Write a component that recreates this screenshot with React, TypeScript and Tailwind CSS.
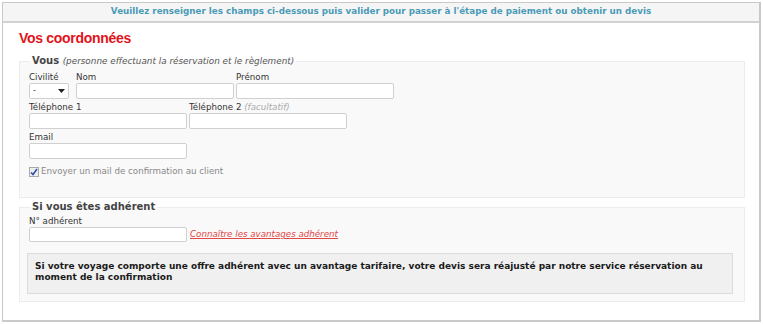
import React from 'react';

const font = "font-['DejaVu_Sans',Verdana,sans-serif]";

function Field({ label, hint, width = 'w-[158px]' }: { label: string; hint?: string; width?: string }) {
  return (
    <div className="flex flex-col">
      <span className="h-[11px] leading-[11px] text-[8.7px] text-[#333]">
        {label}
        {hint && <i className="text-[#aaa]"> {hint}</i>}
      </span>
      <input className={`${width} h-[16px] bg-white border border-[#d0d0d0] rounded-[2px] outline-none`} />
    </div>
  );
}

export default function App() {
  return (
    <div className={`w-[763px] h-[325px] bg-white pt-[2px] pl-[2px] ${font}`}>
      <div className="w-[759px] h-[320px] border border-[#c9c9c9] border-r-2 border-b-2 bg-white">
        <div className="h-[20px] bg-[#f5f5f5] border-b-2 border-[#d2d2d2] flex items-center justify-center">
          <span className="text-[8.75px] font-bold text-[#4b9bb7]">
            Veuillez renseigner les champs ci-dessous puis valider pour passer à l'étape de paiement ou obtenir un devis
          </span>
        </div>

        <div className="px-[16px]">
          <h1 className="mt-[5px] h-[20px] leading-[20px] text-[14px] tracking-[-0.3px] font-bold text-[#e2131b] font-['Liberation_Sans',Arial,sans-serif]">
            Vos coordonnées
          </h1>

          <fieldset className="mt-[7px] w-[726px] border border-[#ececec] bg-[#f9f9f9] pl-[9px] pb-[20px]">
            <legend className="ml-[1px] px-[2px] leading-[12px] text-[10px] font-bold text-[#444]">
              Vous <i className="font-normal text-[8.85px] text-[#555]">(personne effectuant la réservation et le règlement)</i>
            </legend>
            <div className="flex gap-[2px] mt-[5px]">
              <div className="flex flex-col mr-[5px]">
                <span className="h-[11px] leading-[11px] text-[8.7px] text-[#333]">Civilité</span>
                <div className="w-[40px] h-[16px] bg-white border border-[#d0d0d0] rounded-[2px] flex items-center justify-between px-[3px]">
                  <span className="text-[8px] leading-none text-[#333]">-</span>
                  <svg width="7" height="4" viewBox="0 0 7 4"><path d="M0 0h7L3.5 4z" fill="#222" /></svg>
                </div>
              </div>
              <Field label="Nom" />
              <Field label="Prénom" />
            </div>
            <div className="flex gap-[2px] mt-[3px]">
              <Field label="Téléphone 1" />
              <Field label="Téléphone 2" hint="(facultatif)" />
            </div>
            <div className="mt-[3px]">
              <Field label="Email" />
            </div>
            <label className="mt-[7px] flex items-center gap-[2px] text-[8.7px] leading-[11px] text-[#888]">
              <span className="w-[10px] h-[10px] border border-[#aaa] bg-[#eee] flex items-center justify-center">
                <svg width="8" height="8" viewBox="0 0 8 8"><path d="M1 4.5l2 2L7 1" stroke="#2d4fa8" strokeWidth="1.6" fill="none" /></svg>
              </span>
              Envoyer un mail de confirmation au client
            </label>
          </fieldset>

          <fieldset className="mt-[3px] w-[726px] border border-[#ececec] bg-[#f9f9f9] pl-[9px] pr-[11px] pb-[7px]">
            <legend className="ml-[1px] px-[2px] leading-[12px] text-[10px] font-bold text-[#444]">Si vous êtes adhérent</legend>
            <span className="block mt-[3px] h-[11px] leading-[11px] text-[8.7px] text-[#333]">N° adhérent</span>
            <div className="flex items-center gap-[3px]">
              <input className="w-[158px] h-[15px] bg-white border border-[#d0d0d0] rounded-[2px] outline-none" />
              <a className="text-[8.7px] italic underline text-[#e04848] leading-[11px]">Connaître les avantages adhérent</a>
            </div>
            <div className="mt-[11px] -ml-[2px] h-[41px] bg-[#f0f0f0] border border-[#dcdcdc] px-[7px] pt-[7px]">
              <p className="text-[9px] font-bold leading-[11px] text-[#1a1a1a]">
                Si votre voyage comporte une offre adhérent avec un avantage tarifaire, votre devis sera réajusté par notre service réservation au moment de la confirmation
              </p>
            </div>
          </fieldset>
        </div>
      </div>
    </div>
  );
}
